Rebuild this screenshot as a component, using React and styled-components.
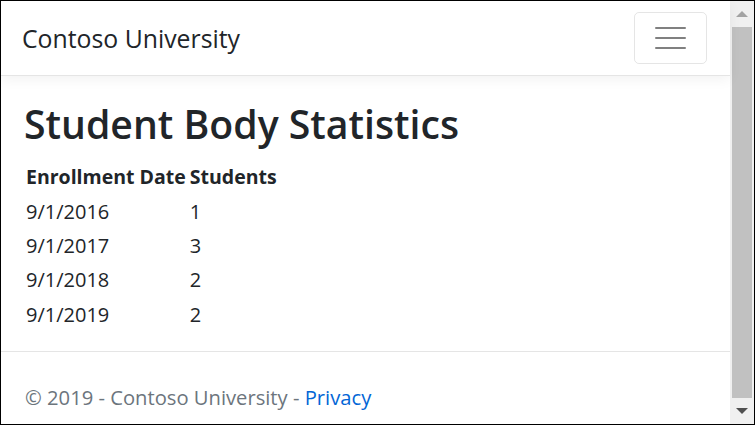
import React from 'react';
import styled, { createGlobalStyle } from 'styled-components';

const GlobalStyle = createGlobalStyle`
  html, body {
    margin: 0;
    padding: 0;
    background: #fff;
  }
  body {
    font-family: "Open Sans", "Noto Sans", sans-serif;
    color: #212529;
    overflow: hidden;
  }
`;

const stats = [
  { date: '9/1/2016', count: 1 },
  { date: '9/1/2017', count: 3 },
  { date: '9/1/2018', count: 2 },
  { date: '9/1/2019', count: 2 },
];

const App = () => {
  return (
    <>
      <GlobalStyle />
      <Frame>
        <Page>
          <Navbar>
            <Brand>Contoso University</Brand>
            <Toggler aria-label="Toggle navigation">
              <TogglerBar />
              <TogglerBar />
              <TogglerBar />
            </Toggler>
          </Navbar>
          <Main>
            <Title>Student Body Statistics</Title>
            <Table>
              <thead>
                <tr>
                  <Th>Enrollment Date</Th>
                  <Th>Students</Th>
                </tr>
              </thead>
              <tbody>
                {stats.map((s) => (
                  <tr key={s.date}>
                    <Td>{s.date}</Td>
                    <Td>{s.count}</Td>
                  </tr>
                ))}
              </tbody>
            </Table>
          </Main>
          <Footer>
            © 2019 - Contoso University - <FooterLink href="#">Privacy</FooterLink>
          </Footer>
        </Page>
        <Scrollbar>
          <Arrow dir="up" />
          <Track>
            <Thumb />
          </Track>
          <Arrow dir="down" />
        </Scrollbar>
      </Frame>
    </>
  );
};

export default App;

const Frame = styled.div`
  box-sizing: border-box;
  width: 755px;
  height: 425px;
  border: 1px solid #000;
  display: flex;
  overflow: hidden;
`;

const Page = styled.div`
  flex: 1;
  display: flex;
  flex-direction: column;
  min-width: 0;
`;

const Navbar = styled.nav`
  box-sizing: border-box;
  height: 75px;
  display: flex;
  align-items: center;
  justify-content: space-between;
  padding: 0 23px 0 21px;
  border-bottom: 1px solid #e5e5e5;
  box-shadow: 0 4px 12px rgba(0, 0, 0, 0.05);
  position: relative;
  z-index: 1;
`;

const Brand = styled.a`
  font-size: 24.8px;
  color: #212529;
  text-decoration: none;
  margin-top: -1px;
`;

const Toggler = styled.button`
  box-sizing: border-box;
  width: 73px;
  height: 52px;
  margin-top: -1px;
  background: transparent;
  border: 1px solid rgba(0, 0, 0, 0.1);
  border-radius: 5px;
  display: flex;
  flex-direction: column;
  align-items: center;
  justify-content: center;
  gap: 8px;
  padding: 0;
`;

const TogglerBar = styled.span`
  display: block;
  width: 31px;
  height: 2px;
  background: #808080;
  border-radius: 1px;
`;

const Main = styled.main`
  flex: 1;
  padding: 0 23px;
`;

const Title = styled.h1`
  font-size: 39.2px;
  font-weight: 600;
  line-height: 1.2;
  margin: 24px 0 12px;
`;

const Table = styled.table`
  border-collapse: collapse;
  font-size: 20px;
`;

const Th = styled.th`
  text-align: left;
  font-size: 19.5px;
  font-weight: 700;
  padding: 0 2px;
  height: 35px;
`;

const Td = styled.td`
  padding: 0 2px;
  height: 34.3px;
`;

const Footer = styled.footer`
  box-sizing: border-box;
  height: 73px;
  border-top: 1px solid #e5e5e5;
  padding: 18px 24px 0;
  display: flex;
  align-items: center;
  font-size: 20.2px;
  color: #6c757d;
  white-space: pre;
`;

const FooterLink = styled.a`
  color: #0366d6;
  text-decoration: none;
`;

const Scrollbar = styled.div`
  width: 24px;
  background: #f0f0f0;
  display: flex;
  flex-direction: column;
  align-items: center;
`;

const Track = styled.div`
  flex: 1;
  width: 100%;
  padding: 0 2px;
  box-sizing: border-box;
`;

const Thumb = styled.div`
  height: 100%;
  background: #c1c1c1;
`;

const Arrow = styled.div`
  height: 26px;
  width: 100%;
  display: flex;
  align-items: center;
  justify-content: center;
  &::before {
    content: '';
    width: 0;
    height: 0;
    border-left: 6px solid transparent;
    border-right: 6px solid transparent;
    ${(p) =>
      p.dir === 'up'
        ? 'border-bottom: 6px solid #a3a3a3;'
        : 'border-top: 6px solid #505050;'}
  }
`;
